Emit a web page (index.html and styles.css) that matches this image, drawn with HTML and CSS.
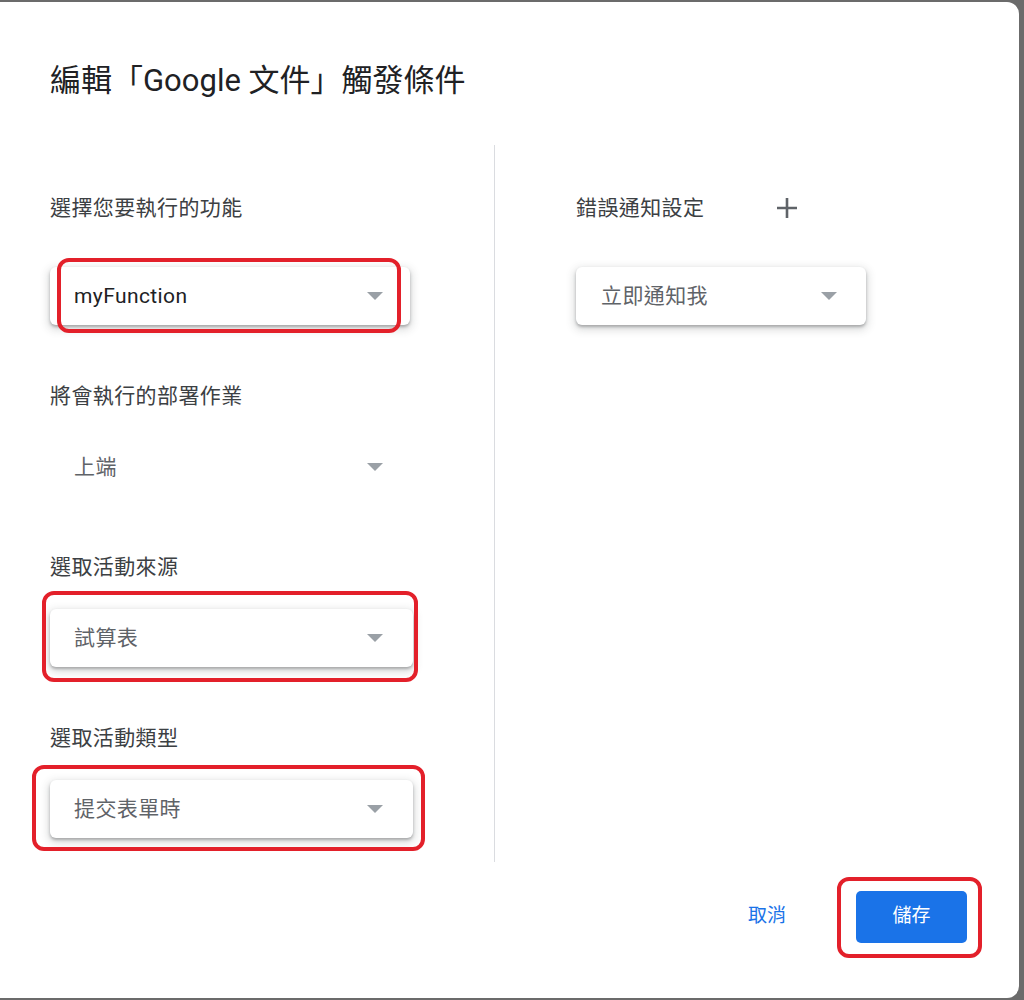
FILE: index.html
```html
<!DOCTYPE html>
<html lang="zh-Hant">
<head>
<meta charset="utf-8">
<title>編輯「Google 文件」觸發條件</title>
<link rel="stylesheet" href="styles.css">
</head>
<body>
<div class="dialog">
  <div class="header">
    <h1 class="title">編輯「Google 文件」觸發條件</h1>
  </div>
  <div class="body">
    <div class="col col-left">
      <div class="field field-first">
        <div class="label">選擇您要執行的功能</div>
        <div class="select-wrap select-gap-first">
          <div class="select select-narrow raised">
            <span class="value value-dark">myFunction</span>
            <span class="arrow"></span>
          </div>
          <div class="mark mark-1"></div>
        </div>
      </div>
      <div class="field">
        <div class="label">將會執行的部署作業</div>
        <div class="select-wrap">
          <div class="select flat">
            <span class="value">上端</span>
            <span class="arrow"></span>
          </div>
        </div>
      </div>
      <div class="field">
        <div class="label">選取活動來源</div>
        <div class="select-wrap">
          <div class="select raised">
            <span class="value">試算表</span>
            <span class="arrow"></span>
          </div>
          <div class="mark mark-3"></div>
        </div>
      </div>
      <div class="field">
        <div class="label">選取活動類型</div>
        <div class="select-wrap">
          <div class="select raised">
            <span class="value">提交表單時</span>
            <span class="arrow"></span>
          </div>
          <div class="mark mark-4"></div>
        </div>
      </div>
    </div>
    <div class="divider"></div>
    <div class="col col-right">
      <div class="field field-first">
        <div class="label-row">
          <div class="label">錯誤通知設定</div>
          <svg class="plus" width="22" height="22" viewBox="0 0 22 22" aria-hidden="true">
            <path d="M11 1v20M1 11h20" stroke="#5f6368" stroke-width="2.6" fill="none"/>
          </svg>
        </div>
        <div class="select-wrap select-gap-first">
          <div class="select select-right raised">
            <span class="value">立即通知我</span>
            <span class="arrow"></span>
          </div>
        </div>
      </div>
    </div>
  </div>
  <div class="footer">
    <button class="btn btn-text">取消</button>
    <div class="save-wrap">
      <button class="btn btn-primary">儲存</button>
      <div class="mark mark-save"></div>
    </div>
  </div>
</div>
</body>
</html>
```

FILE: styles.css
```css
* { box-sizing: border-box; }

html, body {
  margin: 0;
  padding: 0;
  height: 1000px;
  overflow: hidden;
}

body {
  background: #6b6b6b;
  font-family: Roboto, "Noto Sans CJK TC", sans-serif;
  padding-top: 2px;
}

.dialog {
  width: 1019px;
  height: 996px;
  background: #ffffff;
  border-radius: 0 12px 12px 0;
  display: flex;
  flex-direction: column;
}

.header {
  height: 143px;
  padding: 58px 0 0 50px;
  flex: none;
}

.title {
  margin: 0;
  font-size: 31px;
  line-height: 42px;
  font-weight: 400;
  color: #202124;
}

.body {
  height: 717px;
  display: flex;
  flex: none;
}

.col-left {
  width: 494px;
  flex: none;
  padding: 48px 0 0 50px;
}

.divider {
  width: 1px;
  background: #dadce0;
  flex: none;
}

.col-right {
  flex: 1;
  padding: 48px 0 0 81px;
}

.field { margin-top: 56px; }
.field-first { margin-top: 0; }

.label {
  font-size: 21px;
  line-height: 30px;
  color: #3c4043;
  letter-spacing: 0.4px;
}

.label-row {
  display: flex;
  align-items: center;
  gap: 72px;
}

.plus { display: block; }

.select-wrap {
  position: relative;
  width: fit-content;
  margin-top: 27px;
}

.select-gap-first { margin-top: 44px; }

.select {
  width: 363px;
  height: 58px;
  display: flex;
  align-items: center;
  justify-content: space-between;
  padding: 0 30px 0 24px;
  border-radius: 6px;
  background: #fff;
}

.select-narrow {
  width: 360px;
  padding-right: 27px;
}

.select-right {
  width: 290px;
  padding-left: 25px;
  padding-right: 29px;
}

.raised {
  box-shadow: 0 2px 3px rgba(60, 64, 67, 0.35), 0 3px 8px 2px rgba(60, 64, 67, 0.18);
}

.value {
  font-size: 21px;
  line-height: 30px;
  color: #5f6368;
  letter-spacing: 0.4px;
}

.value-dark { color: #202124; }

.arrow {
  width: 0;
  height: 0;
  border-left: 8px solid transparent;
  border-right: 8px solid transparent;
  border-top: 8px solid #9aa0a6;
}

.mark {
  position: absolute;
  border: 4px solid #e3202a;
  border-radius: 12px;
  pointer-events: none;
}

.mark-1 { left: 7px; right: 9px; top: -9px; bottom: -8px; }
.mark-3 { left: -8px; right: -5px; top: -18px; bottom: -15px; }
.mark-4 { left: -18px; right: -12px; top: -15px; bottom: -13px; }

.footer {
  flex: 1;
  display: flex;
  justify-content: flex-end;
  align-items: flex-start;
  padding: 29px 52px 0 0;
}

.btn {
  font-family: Roboto, "Noto Sans CJK TC", sans-serif;
  font-size: 19px;
  line-height: 48px;
  padding-bottom: 4px;
  border: none;
  cursor: pointer;
  height: 52px;
  border-radius: 5px;
}

.btn-text {
  background: none;
  color: #1a73e8;
  padding-left: 16px;
  padding-right: 16px;
  margin-right: 54px;
}

.save-wrap { position: relative; }

.btn-primary {
  width: 111px;
  background: #1a73e8;
  color: #ffffff;
}

.mark-save { left: -19px; right: -15px; top: -14px; bottom: -15px; }
```
